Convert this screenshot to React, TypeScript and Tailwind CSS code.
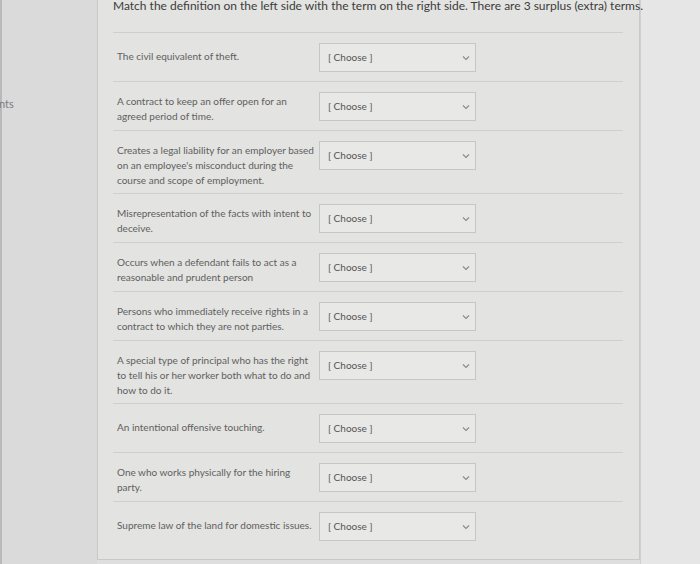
import React from "react";

const rows: string[][] = [
  ["The civil equivalent of theft."],
  ["A contract to keep an offer open for an", "agreed period of time."],
  [
    "Creates a legal liability for an employer based",
    "on an employee's misconduct during the",
    "course and scope of employment.",
  ],
  ["Misrepresentation of the facts with intent to", "deceive."],
  ["Occurs when a defendant fails to act as a", "reasonable and prudent person"],
  ["Persons who immediately receive rights in a", "contract to which they are not parties."],
  [
    "A special type of principal who has the right",
    "to tell his or her worker both what to do and",
    "how to do it.",
  ],
  ["An intentional offensive touching."],
  ["One who works physically for the hiring", "party."],
  ["Supreme law of the land for domestic issues."],
];

function Chevron() {
  return (
    <svg width="8" height="6" viewBox="0 0 8 6" className="shrink-0">
      <path d="M1 1.5 L4 4.5 L7 1.5" fill="none" stroke="#8a8a8a" strokeWidth="1.1" />
    </svg>
  );
}

export default function App() {
  return (
    <div
      className="flex h-[564px] w-[700px] overflow-hidden bg-[#dedede] text-[#606060]"
      style={{ fontFamily: "Lato, 'Open Sans', sans-serif" }}
    >
      <div className="relative w-[97px] shrink-0 border-l-[2px] border-[#b9b9b9] bg-[#dadada]">
        <div className="absolute left-[-3px] top-[96px] text-[11px] leading-[16px] text-[#7a7a7a]">
          nts
        </div>
      </div>
      <div className="relative z-10 flex h-[560px] w-[543px] shrink-0 flex-col border-x border-b border-[#c9c9c9] bg-[#e3e3e1] pl-[15px] pr-[16px]">
        <div className="-mt-[2px] h-[35px] shrink-0 border-b border-[#cfcfcd] text-[12px] leading-[16px] whitespace-nowrap text-[#3c3c3c]">
          Match the definition on the left side with the term on the right side. There are 3 surplus (extra) terms.
        </div>
        {rows.map((lines, i) => (
          <div
            key={i}
            className={`flex shrink-0 items-start pt-[10px] ${i < rows.length - 1 ? "border-b border-[#cfcfcd]" : ""}`}
          >
            <div
              className={`w-[206px] shrink-0 pl-[4px] pb-[5px] text-[10px] leading-[15px] ${
                lines.length === 1 ? "pt-[6px]" : "pt-[2px]"
              }`}
            >
              {lines.map((l, j) => (
                <div key={j} className="whitespace-nowrap">
                  {l}
                </div>
              ))}
            </div>
            <div className="mb-[9px] flex h-[29px] w-[157px] shrink-0 items-center justify-between border border-[#c6c6c4] bg-[#e8e8e6] pl-[8px] pr-[5px] text-[10px] text-[#555]">
              <span>[ Choose ]</span>
              <Chevron />
            </div>
          </div>
        ))}
      </div>
      <div className="flex-1 border-l border-[#d0d0d0] bg-[#e6e6e6]" />
    </div>
  );
}
